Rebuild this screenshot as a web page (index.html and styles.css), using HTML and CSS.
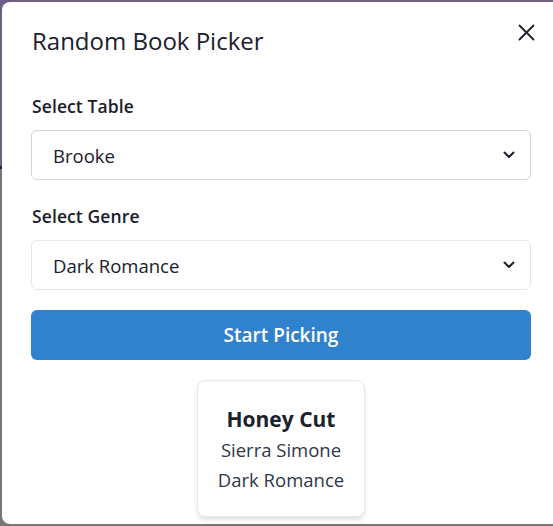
FILE: index.html
```html
<!DOCTYPE html>
<html>
<head>
<meta charset="utf-8">
<link rel="stylesheet" href="styles.css">
</head>
<body>
<div class="modal">
  <header class="modal-header">
    <h2 class="title">Random Book Picker</h2>
    <button class="close" aria-label="Close">
      <svg width="17" height="17" viewBox="0 0 17 17"><path d="M1.5 1.5 L15.5 15.5 M15.5 1.5 L1.5 15.5" stroke="#1a202c" stroke-width="1.8" stroke-linecap="round" fill="none"/></svg>
    </button>
  </header>
  <div class="modal-body">
    <div class="field">
      <label class="label">Select Table</label>
      <div class="select dark">
        <span>Brooke</span>
        <svg class="chev" width="12" height="8" viewBox="0 0 12 8"><path d="M1.5 1.5 L6 6 L10.5 1.5" stroke="#1a202c" stroke-width="2" fill="none" stroke-linecap="round" stroke-linejoin="round"/></svg>
      </div>
    </div>
    <div class="field">
      <label class="label">Select Genre</label>
      <div class="select">
        <span>Dark Romance</span>
        <svg class="chev" width="12" height="8" viewBox="0 0 12 8"><path d="M1.5 1.5 L6 6 L10.5 1.5" stroke="#1a202c" stroke-width="2" fill="none" stroke-linecap="round" stroke-linejoin="round"/></svg>
      </div>
    </div>
    <button class="btn">Start Picking</button>
    <div class="result">
      <div class="card">
        <div class="book-title">Honey Cut</div>
        <div class="line">Sierra Simone</div>
        <div class="line">Dark Romance</div>
      </div>
    </div>
  </div>
</div>
</body>
</html>
```
FILE: styles.css
```css
html, body {
  margin: 0;
  padding: 0;
}
body {
  width: 553px;
  height: 526px;
  overflow: hidden;
  background: linear-gradient(#6e5f85 0, #6e5f85 166px, #2a2a2a 166px, #2a2a2a 169px, #767676 169px);
  font-family: "Open Sans", "Noto Sans", sans-serif;
  color: #1a202c;
}
.modal {
  margin: 2px 0 0 2px;
  width: 570px;
  height: 522px;
  background: #fff;
  border-radius: 8px 0 0 8px;
  box-sizing: border-box;
}
.modal-header {
  display: flex;
  justify-content: space-between;
  align-items: flex-start;
  padding: 24px 30px 0 30px;
}
.title {
  margin: 0;
  font-size: 24px;
  font-weight: 400;
  line-height: 30px;
  letter-spacing: 0;
}
.close {
  border: 0;
  background: none;
  padding: 0;
  margin: -2px 7px 0 0;
  width: 17px;
  height: 17px;
  display: block;
}
.close svg { display: block; }
.modal-body {
  padding: 38px 22px 0 29px;
  width: 500px;
}
.field + .field {
  margin-top: 24px;
}
.label {
  display: block;
  font-size: 17.5px;
  font-weight: 600;
  line-height: 24px;
  letter-spacing: 0.1px;
  margin: 0 0 12px 1px;
}
.select {
  height: 50px;
  box-sizing: border-box;
  border: 1px solid #e2e8f0;
  border-radius: 6px;
  display: flex;
  align-items: center;
  justify-content: space-between;
  padding: 0 15px 0 21px;
  font-size: 18.5px;
  color: #1a202c;
}
.select.dark {
  border-color: #cbd5e0;
}
.chev { display: block; }
.btn {
  display: block;
  width: 100%;
  height: 50px;
  border: 0;
  border-radius: 6px;
  background: #3182ce;
  color: #fff;
  font-family: inherit;
  font-size: 19px;
  font-weight: 600;
  margin-top: 20px;
  padding: 0;
}
.result {
  display: flex;
  justify-content: center;
  padding-top: 20px;
}
.card {
  width: 168px;
  box-sizing: border-box;
  border: 1px solid #e2e8f0;
  border-radius: 8px;
  box-shadow: 0 4px 6px -1px rgba(0,0,0,0.1), 0 2px 4px -1px rgba(0,0,0,0.06);
  padding: 22px 0 21px;
  text-align: center;
}
.book-title {
  font-size: 21px;
  font-weight: 700;
  line-height: 32px;
}
.line {
  font-size: 18.5px;
  line-height: 30px;
  color: #2d3748;
}
```
